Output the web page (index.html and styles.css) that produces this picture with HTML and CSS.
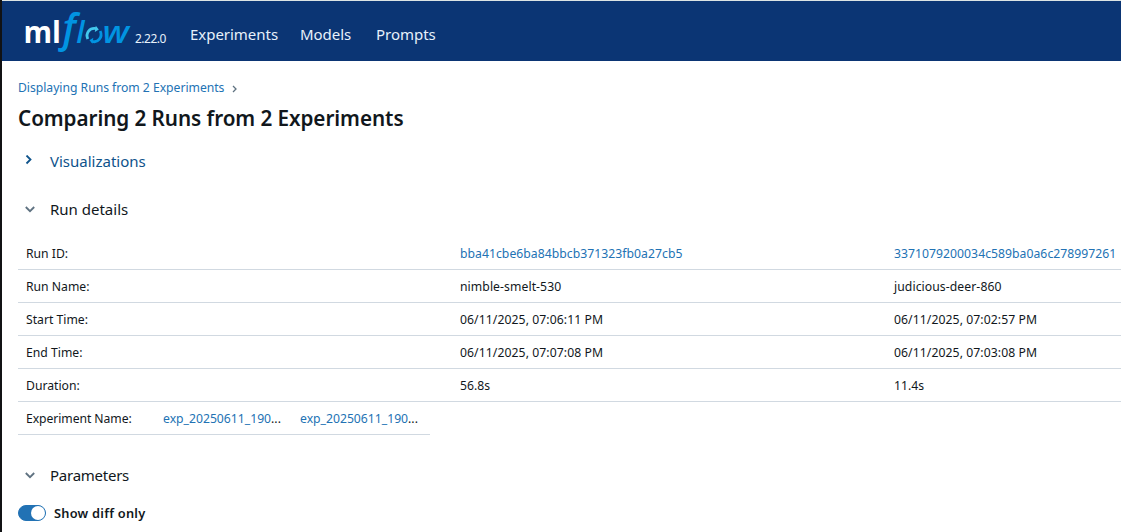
FILE: index.html
```html
<!DOCTYPE html>
<html lang="en">
<head>
<meta charset="utf-8">
<title>MLflow</title>
<link rel="stylesheet" href="styles.css">
</head>
<body>
<div class="window">
  <header class="topbar">
    <svg class="logo" width="108" height="44" viewBox="0 0 108 44" role="img" aria-label="mlflow">
      <text class="logo-ml" x="-1.500" y="33" textLength="37.500" lengthAdjust="spacingAndGlyphs">ml</text>
      <text class="logo-f" x="37.500" y="32">f</text>
      <text class="logo-l" x="51.200" y="32.500">l</text>
      <path class="ring light" d="M62.800 29C60.300 23 64.500 17.200 71.500 18.600"/>
      <path class="ring" d="M75.200 21C78 27 73 33.500 66.800 31.200"/>
      <path class="arrow-light" d="M70.800 15.800l3 3.700-4 2.500z"/>
      <path class="arrow" d="M68.300 27.800l-3.800 2.400 3 3.600z"/>
      <text class="logo-w" x="77.500" y="32.500" textLength="26.500" lengthAdjust="spacingAndGlyphs">w</text>
    </svg>
    <span class="version">2.22.0</span>
    <nav class="nav">
      <a class="nav-exp">Experiments</a>
      <a class="nav-mod">Models</a>
      <a class="nav-pro">Prompts</a>
    </nav>
  </header>
  <main class="content">
    <div class="crumbs">
      <a>Displaying Runs from 2 Experiments</a>
      <svg class="crumb-chevron" width="5" height="8" viewBox="0 0 5 8"><path d="M1 1l3 3-3 3"/></svg>
    </div>
    <h1>Comparing 2 Runs from 2 Experiments</h1>
    <div class="section active">
      <svg class="chevron" width="24" height="12" viewBox="0 0 24 12"><path d="M8.500 0.500l4 4-4 4"/></svg>
      <span>Visualizations</span>
    </div>
    <div class="section details">
      <svg class="chevron" width="24" height="12" viewBox="0 0 24 12"><path d="M7.800 4l4.200 4.200L16.200 4"/></svg>
      <span>Run details</span>
    </div>
    <div class="runs">
      <div class="row"><span>Run ID:</span><a class="hash">bba41cbe6ba84bbcb371323fb0a27cb5</a><a class="hash">3371079200034c589ba0a6c278997261</a></div>
      <div class="row"><span>Run Name:</span><span class="value">nimble-smelt-530</span><span class="value">judicious-deer-860</span></div>
      <div class="row"><span>Start Time:</span><span class="value">06/11/2025, 07:06:11 PM</span><span class="value">06/11/2025, 07:02:57 PM</span></div>
      <div class="row"><span>End Time:</span><span class="value">06/11/2025, 07:07:08 PM</span><span class="value">06/11/2025, 07:03:08 PM</span></div>
      <div class="row"><span>Duration:</span><span>56.8s</span><span>11.4s</span></div>
      <div class="row names"><span class="label-long">Experiment Name:</span><span><a>exp_20250611_190</a>...</span><span><a>exp_20250611_190</a>...</span></div>
    </div>
    <div class="section params">
      <svg class="chevron" width="24" height="12" viewBox="0 0 24 12"><path d="M7.800 4l4.200 4.200L16.200 4"/></svg>
      <span>Parameters</span>
    </div>
    <div class="toggle">
      <span class="switch"><span class="knob"></span></span>
      <span>Show diff only</span>
    </div>
  </main>
</div>
</body>
</html>
```
FILE: styles.css
```css
* { box-sizing: border-box; }
body {
  margin: 0;
  overflow: hidden;
  background: #fff;
  color: #11171c;
  font: 12.2px/20px "Noto Sans", "Open Sans", sans-serif;
}
.window {
  height: 532px;
  border-left: 2px solid #111214;
  overflow: hidden;
}
.topbar {
  display: flex;
  height: 61px;
  border-top: 1px solid #dce4e4;
  background: #0b3574;
  color: #e7f1fb;
  padding-left: 23px;
}
.logo { margin-top: 9px; flex: none; overflow: visible; }
.logo text { font-family: "Open Sans", sans-serif; }
.logo-ml { fill: #fff; font-size: 30px; font-weight: 700; }
.logo .logo-f { font-size: 39px; font-style: italic; font-weight: 600; fill: #0194e2; }
.logo-l, .logo-w { font-size: 30px; font-style: italic; font-weight: 600; fill: #0194e2; }
.ring { fill: none; stroke: #0194e2; stroke-width: 2.8; }
.ring.light { stroke: #43c9ed; }
.arrow { fill: #0194e2; }
.arrow-light { fill: #43c9ed; }
.version { margin: 28px 0 0 2px; width: 55px; font-size: 12px; letter-spacing: -0.5px; }
.nav { display: flex; margin-top: 23px; font-size: 15px; letter-spacing: -0.03px; }
.nav-exp { width: 110px; }
.nav-mod { width: 76px; }
.content { padding-left: 16px; }
.content a { color: #2272b4; }
.crumbs { display: flex; align-items: center; height: 20px; margin-top: 17px; letter-spacing: -0.03px; }
.crumb-chevron { margin: 2px 0 0 8px; fill: none; stroke: #5f7281; stroke-width: 1.3; }
h1 { margin: 6px 0 0; font-size: 20.7px; line-height: 28px; font-weight: 600; letter-spacing: -0.07px; white-space: nowrap; }
.section { display: flex; align-items: center; height: 24px; margin-top: 17px; font-size: 15px; gap: 8px; }
.chevron { fill: none; stroke: #5f7281; stroke-width: 1.8; }
.active { color: #0e538b; }
.active .chevron { stroke: #0e538b; }
.details { margin-top: 24px; }
.runs { margin-top: 16px; width: 1302px; }
.row {
  display: grid;
  grid-template-columns: 434px 434px 434px;
  height: 33px;
  padding-top: 7px;
  border-bottom: 1px solid #d1d9e1;
}
.row > * { padding-left: 8px; white-space: nowrap; }
.hash { letter-spacing: 0.04px; }
.value { letter-spacing: 0.08px; }
.label-long { letter-spacing: -0.07px; }
.names { width: 412px; grid-template-columns: 137px 137px 138px; }
.params { margin-top: 28px; letter-spacing: -0.25px; }
.toggle { display: flex; align-items: center; gap: 8px; height: 20px; margin-top: 16px; font-size: 12.8px; font-weight: 600; letter-spacing: 0.25px; }
.switch { width: 28px; height: 16px; border: 1px solid #2272b4; border-radius: 8px; background: #2272b4; display: flex; justify-content: flex-end; }
.knob { width: 14px; height: 14px; border-radius: 50%; background: #fff; }
```
